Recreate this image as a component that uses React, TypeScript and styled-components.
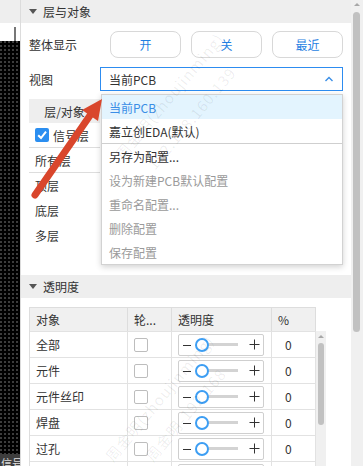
import React from 'react'
import styled, { createGlobalStyle } from 'styled-components'

const GlobalStyle = createGlobalStyle`
  html, body {
    margin: 0;
    padding: 0;
  }
  body {
    width: 363px;
    height: 466px;
    overflow: hidden;
    background: #fff;
    font-family: "Noto Sans CJK SC", "Noto Sans", sans-serif;
    font-size: 12px;
    color: #333;
  }
`

type Tone = 'active' | 'normal' | 'disabled'

const menuItems: { label: string; tone: Tone; divider?: boolean }[] = [
  { label: '当前PCB', tone: 'active' },
  { label: '嘉立创EDA(默认)', tone: 'normal', divider: true },
  { label: '另存为配置...', tone: 'normal' },
  { label: '设为新建PCB默认配置', tone: 'disabled' },
  { label: '重命名配置...', tone: 'disabled' },
  { label: '删除配置', tone: 'disabled' },
  { label: '保存配置', tone: 'disabled' },
]

const layers = [
  { name: '信号层', checked: true, line: true },
  { name: '所有层', line: true },
  { name: '顶层' },
  { name: '底层' },
  { name: '多层' },
]

// last row is only peeking in at the bottom edge
const opacityRows = [
  { name: '全部', value: '0' },
  { name: '元件', value: '0' },
  { name: '元件丝印', value: '0' },
  { name: '焊盘', value: '0' },
  { name: '过孔', value: '0' },
  { name: '', value: '' },
]

const SliderControl: React.FC = () => (
  <SliderBox>
    <svg width="10" height="10" viewBox="0 0 10 10">
      <line x1="1" y1="5.5" x2="9" y2="5.5" stroke="#333" strokeWidth="1" />
    </svg>
    <Track>
      <Thumb />
    </Track>
    <svg width="11" height="11" viewBox="0 0 11 11">
      <line x1="0.5" y1="5.5" x2="10.5" y2="5.5" stroke="#333" strokeWidth="1" />
      <line x1="5.5" y1="0.5" x2="5.5" y2="10.5" stroke="#333" strokeWidth="1" />
    </svg>
  </SliderBox>
)

const App: React.FC = () => {
  return (
    <>
      <GlobalStyle />
      <Screen>
        <LeftStrip>
          <StripTop />
          <StripWhite>
            <Ruler />
          </StripWhite>
          <Canvas />
          <CanvasTab>信号层</CanvasTab>
        </LeftStrip>

        <Panel>
          <SectionHeader>
            <Caret />
            层与对象
          </SectionHeader>
          <SectionBody>
            <FieldRow>
              <FieldLabel width={81}>整体显示</FieldLabel>
              <ButtonGroup>
                <PillButton>开</PillButton>
                <PillButton>关</PillButton>
                <PillButton>最近</PillButton>
              </ButtonGroup>
            </FieldRow>

            <ViewRow>
              <FieldLabel width={71}>视图</FieldLabel>
              <SelectWrap>
                <SelectBox>
                  当前PCB
                  <svg width="10" height="6" viewBox="0 0 10 6">
                    <polyline points="1.5,5 5,1.5 8.5,5" fill="none" stroke="#3a8ee6" strokeWidth="1.4" />
                  </svg>
                </SelectBox>
                <Dropdown>
                  {menuItems.map(item => (
                    <MenuItem key={item.label} tone={item.tone} divider={item.divider}>
                      {item.label}
                    </MenuItem>
                  ))}
                </Dropdown>
              </SelectWrap>
            </ViewRow>

            <LayerTable>
              <LayerHead>层/对象</LayerHead>
              {layers.map(l => (
                <LayerRow key={l.name} line={l.line}>
                  {l.checked && (
                    <CheckedBox>
                      <svg width="12" height="12" viewBox="0 0 12 12">
                        <polyline points="2.2,6.2 5,9 10,2.6" fill="none" stroke="#fff" strokeWidth="2" />
                      </svg>
                    </CheckedBox>
                  )}
                  {l.name}
                </LayerRow>
              ))}
            </LayerTable>
          </SectionBody>

          <SectionHeader>
            <Caret />
            透明度
          </SectionHeader>
          <TableBody>
            <Table>
              <HeadRow>
                <HeadCell>对象</HeadCell>
                <HeadCell>轮...</HeadCell>
                <HeadCell>透明度</HeadCell>
                <HeadCell>%</HeadCell>
              </HeadRow>
              <BodyWrap>
                <Rows>
                  {opacityRows.map((row, i) => (
                    <DataRow key={i}>
                      <NameCell>{row.name}</NameCell>
                      <BoxCell>
                        <EmptyBox />
                      </BoxCell>
                      <SliderCell>
                        <SliderControl />
                      </SliderCell>
                      <ValueCell>{row.value}</ValueCell>
                    </DataRow>
                  ))}
                </Rows>
                <InnerScroll>
                  <ScrollArrow />
                  <InnerThumb />
                </InnerScroll>
              </BodyWrap>
            </Table>
          </TableBody>
        </Panel>

        <OuterScroll>
          <ScrollArrow />
          <OuterThumb />
        </OuterScroll>

        <Watermark style={{ left: 110, top: 150 }}>周金明(zhoujinming)</Watermark>
        <Watermark style={{ left: 142, top: 160 }}>192.168.160.139</Watermark>
        <Watermark style={{ left: 100, top: 452 }}>周金明(zhoujinming)</Watermark>
        <Watermark style={{ left: 140, top: 452 }}>周金明-192.168</Watermark>

        <ArrowLayer width="363" height="466" viewBox="0 0 363 466">
          <line x1="35" y1="195" x2="91" y2="114" stroke="#d9462c" strokeWidth="7" strokeLinecap="round" />
          <polygon points="102,99 98,121 82,110" fill="#d9462c" />
        </ArrowLayer>
      </Screen>
    </>
  )
}

export default App

const Screen = styled.div`
  position: relative;
  display: flex;
  width: 363px;
  height: 466px;
  overflow: hidden;
`

const LeftStrip = styled.div`
  width: 20px;
  flex: 0 0 20px;
  display: flex;
  flex-direction: column;
  border-right: 1px solid #dcdcdc;
`

const StripTop = styled.div`
  height: 23px;
  flex-shrink: 0;
  background: #eeeeee;
`

const StripWhite = styled.div`
  height: 18px;
  flex-shrink: 0;
  display: flex;
  background: #fff;
`

const Ruler = styled.div`
  width: 2px;
  margin-left: 14px;
  margin-top: 4px;
  background: #777;
`

const Canvas = styled.div`
  flex: 1 1 auto;
  background-color: #000;
  background-image: radial-gradient(circle at 1px 1px, #3c3c3c 0.8px, transparent 0.9px);
  background-size: 4px 4px;
`

const CanvasTab = styled.div`
  height: 12px;
  flex-shrink: 0;
  background: #3d3d3d;
  color: #ddd;
  font-size: 11px;
  line-height: 18px;
  white-space: nowrap;
  overflow: hidden;
  padding-left: 1px;
`

const Panel = styled.div`
  flex: 1 1 auto;
  display: flex;
  flex-direction: column;
  min-width: 0;
  overflow: hidden;
`

const SectionHeader = styled.div`
  height: 23px;
  flex: 0 0 23px;
  display: flex;
  align-items: center;
  gap: 6px;
  padding-left: 8px;
  background: #eeeeee;
  color: #333;
  font-size: 12px;
`

const Caret = styled.span`
  width: 0;
  height: 0;
  border-left: 4px solid transparent;
  border-right: 4px solid transparent;
  border-top: 5px solid #555;
`

const SectionBody = styled.div`
  height: 252px;
  flex-shrink: 0;
  padding: 8px 0 0 8px;
  box-sizing: border-box;
`

const FieldRow = styled.div`
  display: flex;
  align-items: center;
  height: 27px;
`

const ViewRow = styled(FieldRow)`
  height: 24px;
  margin-top: 9px;
`

const FieldLabel = styled.div<{ width: number }>`
  width: ${p => p.width}px;
  flex: 0 0 ${p => p.width}px;
  color: #333;
`

const ButtonGroup = styled.div`
  display: flex;
  gap: 10px;
`

const PillButton = styled.button`
  width: 71px;
  height: 27px;
  border: 1px solid #d8d8d8;
  border-radius: 8px;
  background: #fff;
  color: #1f7fe2;
  font-family: inherit;
  font-size: 12px;
  padding: 0;
`

const SelectWrap = styled.div`
  position: relative;
  width: 243px;
  height: 24px;
`

const SelectBox = styled.div`
  height: 24px;
  box-sizing: border-box;
  border: 1px solid #2d8cf0;
  display: flex;
  align-items: center;
  justify-content: space-between;
  padding: 0 8px 0 8px;
  color: #333;
`

const Dropdown = styled.div`
  position: absolute;
  top: 27px;
  left: 1px;
  width: 242px;
  box-sizing: border-box;
  background: #fff;
  border: 1px solid #d2d2d2;
  box-shadow: 0 2px 6px rgba(0, 0, 0, 0.18);
  z-index: 5;
`

const toneColor: Record<Tone, string> = {
  active: '#3a8ee6',
  normal: '#333',
  disabled: '#9a9a9a',
}

const MenuItem = styled.div<{ tone: Tone; divider?: boolean }>`
  height: 24px;
  display: flex;
  align-items: center;
  padding-left: 7px;
  color: ${p => toneColor[p.tone]};
  background: ${p => (p.tone === 'active' ? '#e3f4fe' : '#fff')};
  border-bottom: ${p => (p.divider ? '1px solid #cfcfcf' : 'none')};
`

const LayerTable = styled.div`
  margin-top: 8px;
  width: 71px;
`

const LayerHead = styled.div`
  height: 24px;
  display: flex;
  align-items: center;
  justify-content: center;
  background: #eeeeee;
`

const LayerRow = styled.div<{ line?: boolean }>`
  height: 25px;
  box-sizing: border-box;
  display: flex;
  align-items: center;
  padding-left: 6px;
  border-bottom: ${p => (p.line ? '1px solid #dddddd' : 'none')};
`

const CheckedBox = styled.span`
  width: 14px;
  height: 14px;
  border-radius: 2px;
  background: #2b8ef0;
  display: flex;
  align-items: center;
  justify-content: center;
  margin-right: 4px;
`

const TableBody = styled.div`
  flex-shrink: 0;
  padding: 9px 0 0 8px;
`

const Table = styled.div`
  display: flex;
  flex-direction: column;
`

const columns = '98px 44px 100px 44px'

const HeadRow = styled.div`
  display: grid;
  grid-template-columns: ${columns};
  width: 287px;
  height: 24px;
  box-sizing: border-box;
  border-top: 1px solid #dddddd;
  border-left: 1px solid #dddddd;
  background: #f0f0f0;
`

const HeadCell = styled.div`
  display: flex;
  align-items: center;
  padding-left: 6px;
  border-right: 1px solid #dddddd;
  color: #333;
`

const BodyWrap = styled.div`
  display: flex;
`

const Rows = styled.div`
  width: 287px;
  border-left: 1px solid #dddddd;
  box-sizing: border-box;
`

const DataRow = styled.div`
  display: grid;
  grid-template-columns: ${columns};
  height: 26px;
  box-sizing: border-box;
  border-top: 1px solid #e2e2e2;
`

const NameCell = styled.div`
  display: flex;
  align-items: center;
  padding-left: 6px;
  border-right: 1px solid #e2e2e2;
`

const BoxCell = styled.div`
  display: flex;
  align-items: center;
  padding-left: 6px;
  border-right: 1px solid #e2e2e2;
`

const EmptyBox = styled.span`
  width: 14px;
  height: 14px;
  box-sizing: border-box;
  border: 1px solid #bdbdbd;
  border-radius: 2px;
  background: #fff;
`

const SliderCell = styled.div`
  display: flex;
  align-items: center;
  padding: 0 7px 0 6px;
  border-right: 1px solid #e2e2e2;
`

const SliderBox = styled.div`
  flex: 1 1 auto;
  height: 22px;
  box-sizing: border-box;
  border: 1px solid #cfcfcf;
  border-radius: 2px;
  display: flex;
  align-items: center;
  padding: 0 3px 0 3px;
`

const Track = styled.div`
  width: 42px;
  height: 13px;
  margin-left: 4px;
  margin-right: auto;
  display: flex;
  align-items: center;
  background: linear-gradient(#d3d3d3, #d3d3d3) center / 100% 3px no-repeat;
`

const Thumb = styled.span`
  width: 14px;
  height: 14px;
  box-sizing: border-box;
  border: 2px solid #3d9ef3;
  border-radius: 50%;
  background: #fff;
  margin-left: -1px;
`

const ValueCell = styled.div`
  display: flex;
  align-items: center;
  padding-left: 13px;
  border-right: 1px solid #e2e2e2;
`

const InnerScroll = styled.div`
  width: 10px;
  background: #f0f0f0;
  display: flex;
  flex-direction: column;
  align-items: center;
  padding-top: 4px;
`

const ScrollArrow = styled.span`
  width: 0;
  height: 0;
  border-left: 3px solid transparent;
  border-right: 3px solid transparent;
  border-bottom: 3px solid #a8a8a8;
`

const InnerThumb = styled.span`
  width: 6px;
  height: 82px;
  margin-top: 5px;
  border-radius: 3px;
  background: #c1c1c1;
`

const OuterScroll = styled.div`
  width: 12px;
  flex: 0 0 12px;
  background: #f0f0f0;
  display: flex;
  flex-direction: column;
  align-items: flex-start;
  padding: 3px 0 0 2px;
  box-sizing: border-box;
  & > ${ScrollArrow} {
    margin-left: 1px;
  }
`

const OuterThumb = styled.span`
  width: 7px;
  height: 320px;
  margin-top: 6px;
  border-radius: 4px;
  background: #c1c1c1;
`

const Watermark = styled.span`
  position: absolute;
  transform: rotate(-50deg);
  transform-origin: 0 0;
  white-space: nowrap;
  font-size: 15px;
  letter-spacing: 1px;
  color: rgba(0, 0, 0, 0.07);
  pointer-events: none;
  z-index: 8;
`

const ArrowLayer = styled.svg`
  position: absolute;
  top: 0;
  left: 0;
  pointer-events: none;
  z-index: 10;
`
